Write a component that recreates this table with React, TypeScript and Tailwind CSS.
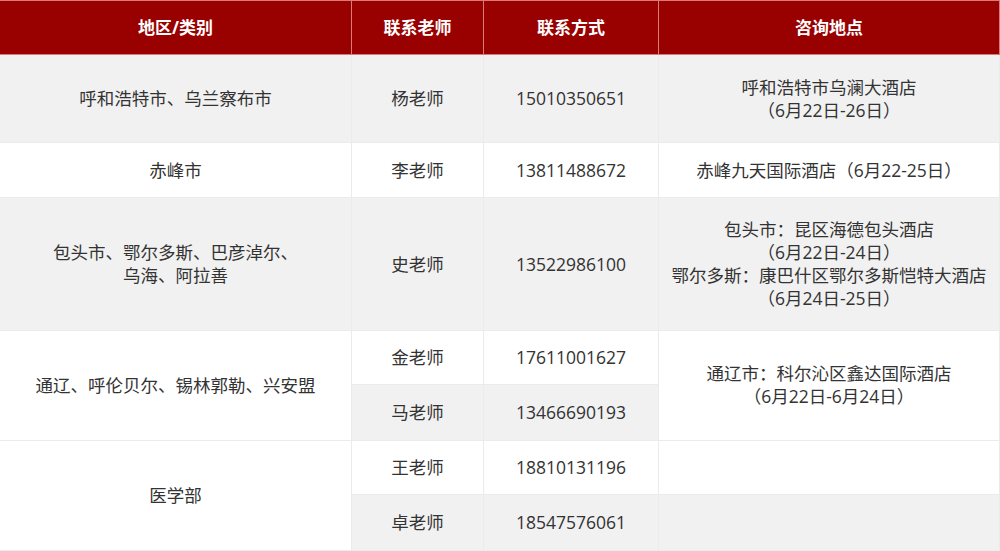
const font = "font-['Open_Sans','Noto_Sans_CJK_SC',sans-serif]";

function Cell({
  className = "",
  children,
}: {
  className?: string;
  children?: React.ReactNode;
}) {
  return (
    <div
      className={
        "flex flex-col items-center justify-center text-center border-r border-b border-[#ebebeb] text-[17.5px] leading-[23px] text-[#333333] " +
        className
      }
    >
      {children}
    </div>
  );
}

function Head({ children }: { children: React.ReactNode }) {
  return (
    <div className="flex items-center justify-center border-r border-y border-[#d77b7b] bg-[#990000] text-[17px] font-bold text-white">
      {children}
    </div>
  );
}

export default function App() {
  return (
    <div className={"w-[1000px] h-[551px] bg-white overflow-hidden " + font}>
      <div className="grid grid-cols-[352px_132px_175px_341px] grid-rows-[55px_88px_55px_133px_54px_56px_54px_56px]">
        {/* header */}
        <Head>地区/类别</Head>
        <Head>联系老师</Head>
        <Head>联系方式</Head>
        <Head>咨询地点</Head>

        {/* 呼和浩特 */}
        <Cell className="bg-[#f1f1f1]">呼和浩特市、乌兰察布市</Cell>
        <Cell className="bg-[#f1f1f1]">杨老师</Cell>
        <Cell className="bg-[#f1f1f1]">15010350651</Cell>
        <Cell className="bg-[#f1f1f1]">
          <span>呼和浩特市乌澜大酒店</span>
          <span>（6月22日-26日）</span>
        </Cell>

        {/* 赤峰 */}
        <Cell>赤峰市</Cell>
        <Cell>李老师</Cell>
        <Cell>13811488672</Cell>
        <Cell>赤峰九天国际酒店（6月22-25日）</Cell>

        {/* 包头 */}
        <Cell className="bg-[#f1f1f1]">
          <span>包头市、鄂尔多斯、巴彦淖尔、</span>
          <span>乌海、阿拉善</span>
        </Cell>
        <Cell className="bg-[#f1f1f1]">史老师</Cell>
        <Cell className="bg-[#f1f1f1]">13522986100</Cell>
        <Cell className="bg-[#f1f1f1]">
          <span>包头市：昆区海德包头酒店</span>
          <span>（6月22日-24日）</span>
          <span>鄂尔多斯：康巴什区鄂尔多斯恺特大酒店</span>
          <span>（6月24日-25日）</span>
        </Cell>

        {/* 通辽 */}
        <Cell className="row-span-2">通辽、呼伦贝尔、锡林郭勒、兴安盟</Cell>
        <Cell>金老师</Cell>
        <Cell>17611001627</Cell>
        <Cell className="row-span-2 pb-[2px]">
          <span>通辽市：科尔沁区鑫达国际酒店</span>
          <span>（6月22日-6月24日）</span>
        </Cell>
        <Cell className="bg-[#f1f1f1]">马老师</Cell>
        <Cell className="bg-[#f1f1f1]">13466690193</Cell>

        {/* 医学部 */}
        <Cell className="row-span-2">医学部</Cell>
        <Cell>王老师</Cell>
        <Cell>18810131196</Cell>
        <Cell />
        <Cell className="bg-[#f1f1f1]">卓老师</Cell>
        <Cell className="bg-[#f1f1f1]">18547576061</Cell>
        <Cell className="bg-[#f1f1f1]" />
      </div>
    </div>
  );
}
